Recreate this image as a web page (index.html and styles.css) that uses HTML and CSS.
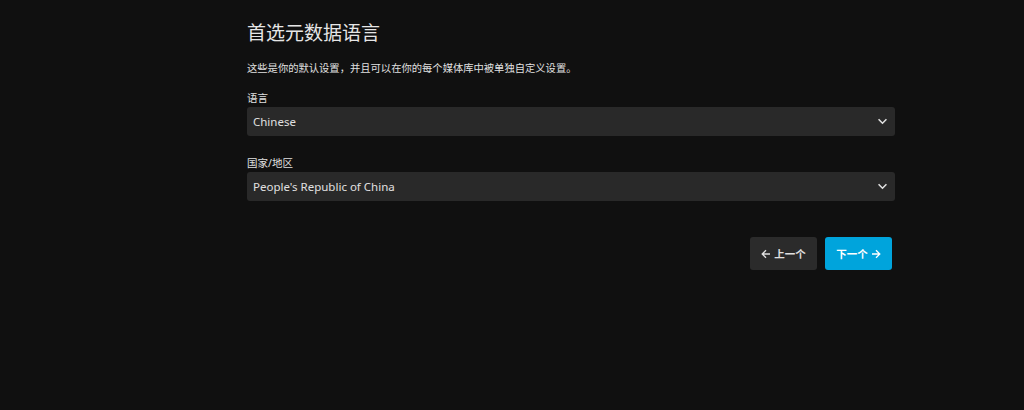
FILE: index.html
```html
<!DOCTYPE html>
<html>
	<head>
		<meta charset="utf-8">
		<link rel="stylesheet" href="styles.css">
	</head>
	<body>
		<div class="wizard">
			<h1>首选元数据语言</h1>
			<p class="intro">这些是你的默认设置，并且可以在你的每个媒体库中被单独自定义设置。</p>

			<div class="field">
				<label>语言</label>
				<div class="select">
					<span>Chinese</span>
					<svg viewBox="0 0 12 8" width="11" height="7"><path d="M1.5 1.5 L6 6 L10.5 1.5" fill="none" stroke="#e0e0e0" stroke-width="1.8"/></svg>
				</div>
			</div>

			<div class="field">
				<label>国家/地区</label>
				<div class="select">
					<span>People's Republic of China</span>
					<svg viewBox="0 0 12 8" width="11" height="7"><path d="M1.5 1.5 L6 6 L10.5 1.5" fill="none" stroke="#e0e0e0" stroke-width="1.8"/></svg>
				</div>
			</div>

			<div class="buttons">
				<button class="btn prev">
					<svg viewBox="0 0 10 10" width="10" height="10"><path d="M9 5 H1.5 M5 1.2 L1.2 5 L5 8.8" fill="none" stroke="currentColor" stroke-width="1.3"/></svg>
					<span>上一个</span>
				</button>
				<button class="btn next">
					<span>下一个</span>
					<svg viewBox="0 0 10 10" width="10" height="10"><path d="M1 5 H8.5 M5 1.2 L8.8 5 L5 8.8" fill="none" stroke="currentColor" stroke-width="1.3"/></svg>
				</button>
			</div>
		</div>
	</body>
</html>
```

FILE: styles.css
```css
body {
	margin: 0;
	background-color: #101010;
	color: #e0e0e0;
	font-family: "Noto Sans", "Noto Sans CJK SC", sans-serif;
}

.wizard {
	width: 648px;
	margin-left: 247px;
	padding-top: 20px;
}

h1 {
	margin: 0;
	font-size: 19px;
	font-weight: 400;
	line-height: 26px;
	color: #e6e6e6;
}

.intro {
	margin: 14px 0 0 0;
	font-size: 10.3px;
	line-height: 16px;
}

.field {
	margin-top: 14px;
}

.field + .field {
	margin-top: 19px;
}

.field label {
	display: block;
	font-size: 10.5px;
	line-height: 16px;
	margin-bottom: 1px;
}

.select {
	display: flex;
	align-items: center;
	justify-content: space-between;
	height: 29px;
	padding: 0 7px 0 6px;
	background-color: #292929;
	border-radius: 3px;
	font-size: 11.5px;
}

.buttons {
	display: flex;
	justify-content: flex-end;
	gap: 8px;
	margin-top: 36px;
	padding-right: 3px;
}

.btn {
	display: flex;
	align-items: center;
	justify-content: center;
	gap: 3px;
	width: 67px;
	height: 33px;
	border: none;
	border-radius: 3px;
	color: #fff;
	font-family: inherit;
	font-size: 10.5px;
	font-weight: 600;
	padding: 0;
}

.prev {
	background-color: #2b2b2b;
	color: #e0e0e0;
}

.next {
	background-color: #00a4dc;
}
```
